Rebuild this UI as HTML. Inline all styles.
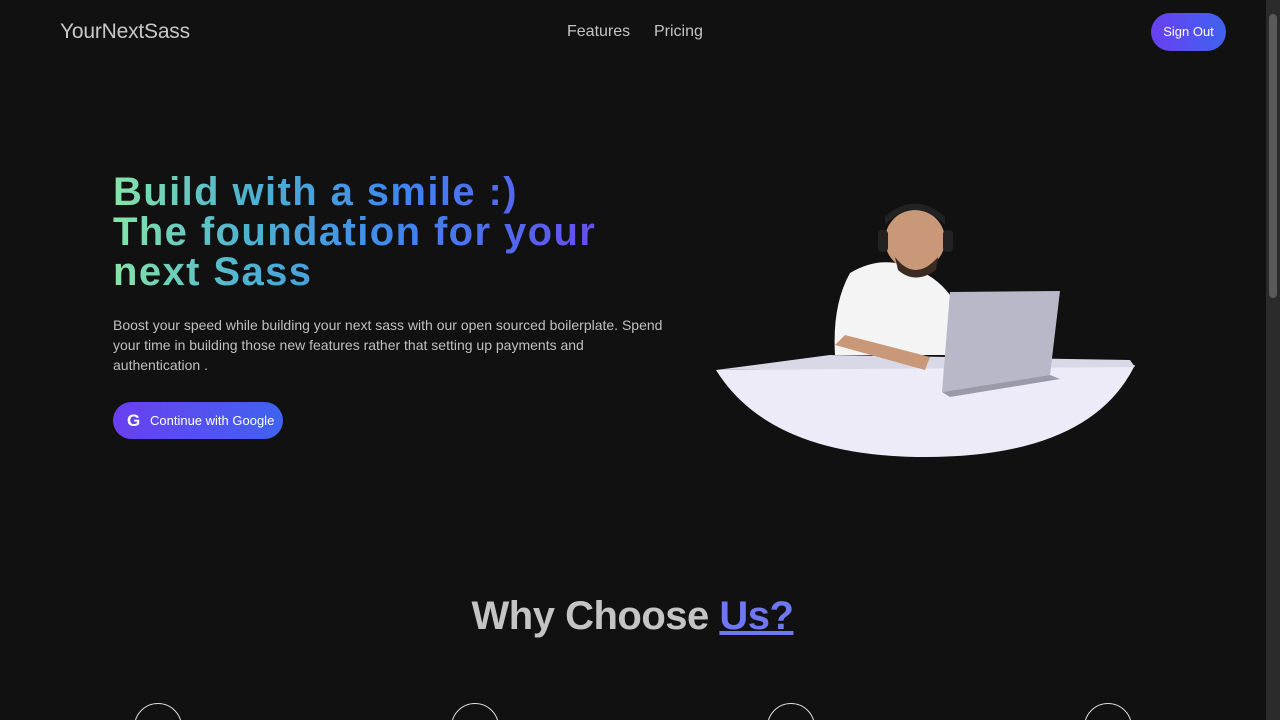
<!DOCTYPE html>
<html><head><meta charset="utf-8"><style>
*{margin:0;padding:0;box-sizing:border-box}
html,body{width:1280px;height:720px;overflow:hidden;background:#111112;font-family:"Liberation Sans",sans-serif}
.wrap{position:relative;width:1280px;height:720px;overflow:hidden}
.sb{position:absolute;right:0;top:0;width:14px;height:720px;background:#2b2b2b}
.sb i{position:absolute;left:3px;top:14px;width:8px;height:284px;background:#5a5a5a;border-radius:4px}
.logo{position:absolute;left:60px;top:20px;font-size:21px;color:#c8c8c8;letter-spacing:-0.2px}
.nav{position:absolute;top:23px;font-size:16px;color:#c4c4c4}
.btn{position:absolute;left:1151px;top:13px;width:75px;height:38px;border-radius:19px;background:linear-gradient(90deg,#6a3ff0,#3f63ef);color:#fff;font-size:13px;text-align:center;line-height:38px}
h1{position:absolute;left:113px;top:172px;font-size:40px;line-height:40px;font-weight:700;background:linear-gradient(90deg,#86e5a8 0%,#4fb3d0 22%,#3f86ee 48%,#6a47ee 85%);-webkit-background-clip:text;background-clip:text;color:transparent;width:600px;letter-spacing:1.4px}
p{position:absolute;left:113px;top:315px;width:560px;font-size:14px;line-height:20px;color:#c0c0c0}
.g{position:absolute;left:113px;top:402px;width:170px;height:37px;border-radius:19px;background:linear-gradient(90deg,#6a3ff0,#3f63ef);color:#fff;font-size:13px;line-height:37px;padding-left:37px}
.g b{position:absolute;left:14px;top:0;font-size:17px;font-weight:700}
h2{position:absolute;left:0;width:1265px;top:594px;text-align:center;font-size:40px;font-weight:700;color:#c4c4c4;letter-spacing:-0.5px}
h2 span{color:#6f78f0;text-decoration:underline}
.c{position:absolute;top:703px;width:48px;height:48px;border:1px solid #ddd;border-radius:50%}
</style></head><body><div class="wrap">
<div class="logo">YourNextSass</div>
<div class="nav" style="left:567px">Features</div>
<div class="nav" style="left:654px">Pricing</div>
<div class="btn">Sign Out</div>
<h1>Build with a smile :)<br>The foundation for your<br>next Sass</h1>
<p>Boost your speed while building your next sass with our open sourced boilerplate. Spend your time in building those new features rather that setting up payments and authentication .</p>
<div class="g"><b>G</b>Continue with Google</div>
<svg style="position:absolute;left:710px;top:195px" width="440" height="270">
<path d="M6 175 L425 170 Q380 262 215 262 Q60 262 6 175Z" fill="#ecebf7"/>
<path d="M6 175 L120 160 L420 165 L425 172Z" fill="#d8d8e6"/>
<path d="M140 78 Q170 60 200 72 Q225 80 240 100 L245 160 L125 160 Q122 110 140 78Z" fill="#f4f4f4"/>
<circle cx="205" cy="45" r="30" fill="#c89878"/>
<path d="M175 30 Q205 0 235 30 L235 22 Q205 -5 175 22Z" fill="#222"/>
<rect x="168" y="35" width="10" height="22" rx="4" fill="#222"/><rect x="233" y="35" width="10" height="22" rx="4" fill="#222"/>
<path d="M185 62 Q205 88 228 62 L226 75 Q205 90 188 75Z" fill="#3a2a22"/>
<path d="M125 150 L215 175 L220 162 L135 140Z" fill="#c89878"/>
<path d="M240 97 L350 96 L340 180 L232 197Z" fill="#b8b8c8"/>
<path d="M232 197 L340 180 L350 184 L240 202Z" fill="#9a9aaa"/>
</svg>
<h2>Why Choose <span>Us?</span></h2>
<div class="c" style="left:134px"></div><div class="c" style="left:451px"></div><div class="c" style="left:767px"></div><div class="c" style="left:1084px"></div>
<div class="sb"><i></i></div>
</div></body></html>
